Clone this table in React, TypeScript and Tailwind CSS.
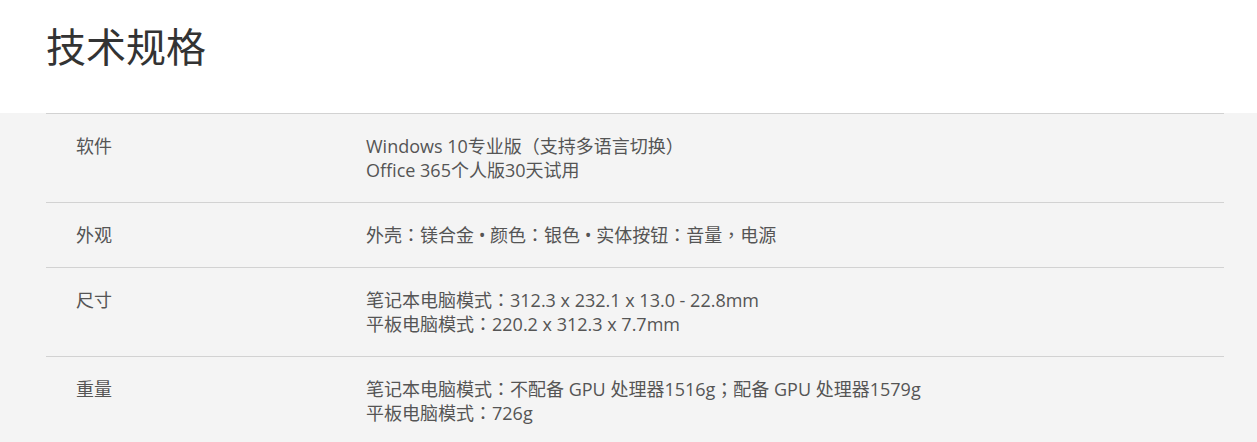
const specs: { label: string; lines: string[] }[] = [
	{ label: "软件", lines: ["Windows 10专业版（支持多语言切换）", "Office 365个人版30天试用"] },
	{ label: "外观", lines: ["外壳：镁合金 • 颜色：银色 • 实体按钮：音量，电源"] },
	{ label: "尺寸", lines: ["笔记本电脑模式：312.3 x 232.1 x 13.0 - 22.8mm", "平板电脑模式：220.2 x 312.3 x 7.7mm"] },
	{ label: "重量", lines: ["笔记本电脑模式：不配备 GPU 处理器1516g；配备 GPU 处理器1579g", "平板电脑模式：726g"] },
]

export default function App() {
	return (
		<div
			className="w-[1257px] h-[442px] overflow-hidden bg-white"
			style={{ fontFamily: '"Open Sans", "Noto Sans CJK TC", sans-serif' }}>
			{/* Header */}
			<div className="h-[113px] pl-[46px] pt-[23px]">
				<h1 className="text-[40px] leading-[48px] text-[#333]">技术规格</h1>
			</div>

			{/* Spec table */}
			<div className="bg-[#f4f4f4] h-full">
				<div className="ml-[46px] w-[1178px]">
					{specs.map((s) => (
						<div key={s.label} className="grid grid-cols-[320px_1fr] border-t border-[#d2d2d2] py-5">
							<div className="pl-[30px] text-[18px] leading-6 text-[#555]">{s.label}</div>
							<div className="text-[18px] leading-6 text-[#555]">
								{s.lines.map((l) => (
									<div key={l}>{l}</div>
								))}
							</div>
						</div>
					))}
				</div>
			</div>
		</div>
	)
}
